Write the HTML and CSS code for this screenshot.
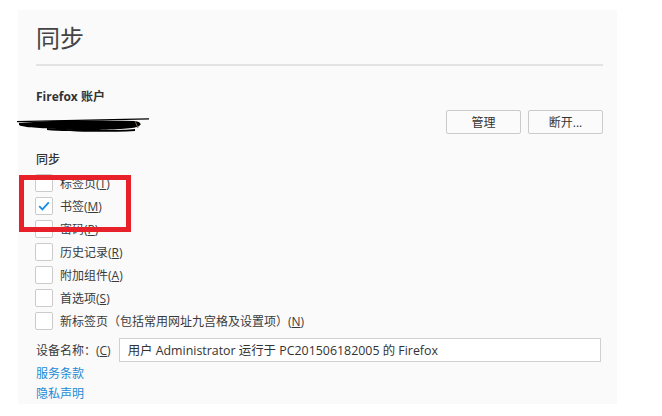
FILE: index.html
```html
<!DOCTYPE html>
<html lang="zh-CN">
<head>
<meta charset="utf-8">
<title>同步</title>
<link rel="stylesheet" href="styles.css">
</head>
<body>
<div class="panel">
  <h1 class="title">同步</h1>
  <div class="sep"></div>
  <section class="account">
    <div class="acct-info">
      <div class="acct-title">Firefox 账户</div>
      <div class="email">
        <svg class="redact" width="134" height="16" viewBox="0 0 134 16">
          <path d="M0 4 L132 1.2 L132 2.4 L0 5.2 Z" fill="#000"/>
          <path d="M2 6 C30 3 80 3 118 4 C124 5 126 8 120 10 C110 13 60 14 40 12 C20 11 4 10 2 8 Z" fill="#000"/>
          <path d="M30 11 C60 13 100 14 118 12 L118 14 C90 15.5 50 15 30 13 Z" fill="#000"/>
          <path d="M118 4 L121 11" stroke="#7a6a40" stroke-width="1"/>
        </svg>
      </div>
    </div>
    <div class="acct-buttons">
      <button class="btn" type="button">管理</button>
      <button class="btn" type="button">断开...</button>
    </div>
  </section>

  <div class="sync-title">同步</div>
  <ul class="checks">
    <li class="check"><span class="box"></span><span>标签页(<u>T</u>)</span></li>
    <li class="check"><span class="box"><svg width="12" height="10" viewBox="0 0 12 10"><path d="M1.2 5.2 L4.4 8.4 L10.8 1.4" fill="none" stroke="#1b8de0" stroke-width="1.8"/></svg></span><span>书签(<u>M</u>)</span></li>
    <li class="check"><span class="box"></span><span>密码(<u>P</u>)</span></li>
    <li class="check"><span class="box"></span><span>历史记录(<u>R</u>)</span></li>
    <li class="check"><span class="box"></span><span>附加组件(<u>A</u>)</span></li>
    <li class="check"><span class="box"></span><span>首选项(<u>S</u>)</span></li>
    <li class="check"><span class="box"></span><span>新标签页（包括常用网址九宫格及设置项）(<u>N</u>)</span></li>
  </ul>

  <div class="device">
    <label class="device-label" for="dev">设备名称：(<u>C</u>)</label>
    <input class="device-input" id="dev" type="text" value="用户 Administrator 运行于 PC201506182005 的 Firefox">
  </div>

  <div class="links">
    <a class="link" href="#">服务条款</a>
    <a class="link" href="#">隐私声明</a>
  </div>
</div>
<div class="annot"></div>
</body>
</html>
```

FILE: styles.css
```css
* { box-sizing: border-box; }

body {
  margin: 0;
  background: #ffffff;
  font-family: "Open Sans", "Noto Sans CJK SC", sans-serif;
  font-size: 12px;
  color: #3a3a3a;
}

.panel {
  margin: 10px 0 0 18px;
  width: 599px;
  height: 394px;
  background: #fafafa;
  padding: 12px 14px 0 18px;
}

.title {
  margin: 0;
  font-size: 24px;
  font-weight: normal;
  line-height: 32px;
  color: #444;
}

.sep {
  height: 2px;
  background: #e3e3e3;
  margin-top: 10px;
}

.account {
  display: flex;
  justify-content: space-between;
  align-items: flex-end;
  margin-top: 22px;
}

.acct-title {
  font-weight: bold;
  height: 18px;
  line-height: 18px;
  color: #333;
}

.email {
  height: 28px;
  padding-top: 11px;
}

.redact {
  display: block;
  margin-left: -19px;
}

.acct-buttons {
  display: flex;
  gap: 7px;
}

.btn {
  width: 75px;
  height: 24px;
  padding: 0;
  border: 1px solid #cbcbcb;
  border-radius: 2px;
  background: #fbfbfb;
  font: inherit;
  color: #333;
}

.sync-title {
  margin-top: 17px;
  height: 18px;
  line-height: 18px;
  color: #333;
  font-weight: 500;
}

.checks {
  list-style: none;
  margin: 2px 0 0;
  padding: 0;
}

.check {
  display: flex;
  align-items: center;
  height: 23px;
  gap: 7px;
}

.box {
  width: 18px;
  height: 18px;
  margin-left: -1px;
  border: 1px solid #cbcbcb;
  border-radius: 2px;
  background: #fff;
  display: flex;
  align-items: center;
  justify-content: center;
}

.box svg { display: block; }

.device {
  display: flex;
  align-items: center;
  gap: 8px;
  margin-top: 6px;
}

.device-input {
  width: 482px;
  height: 24px;
  border: 1px solid #d0d0d0;
  background: #fff;
  padding: 0 0 0 8px;
  font-family: inherit;
  font-size: 12.4px;
  color: #333;
}

.links {
  margin-top: 2px;
}

.link {
  display: block;
  height: 20px;
  line-height: 20px;
  color: #1c8ad6;
  text-decoration: none;
}

.annot {
  position: absolute;
  left: 19px;
  top: 175px;
  width: 112px;
  height: 57px;
  border: 5px solid #e8202a;
}
```
